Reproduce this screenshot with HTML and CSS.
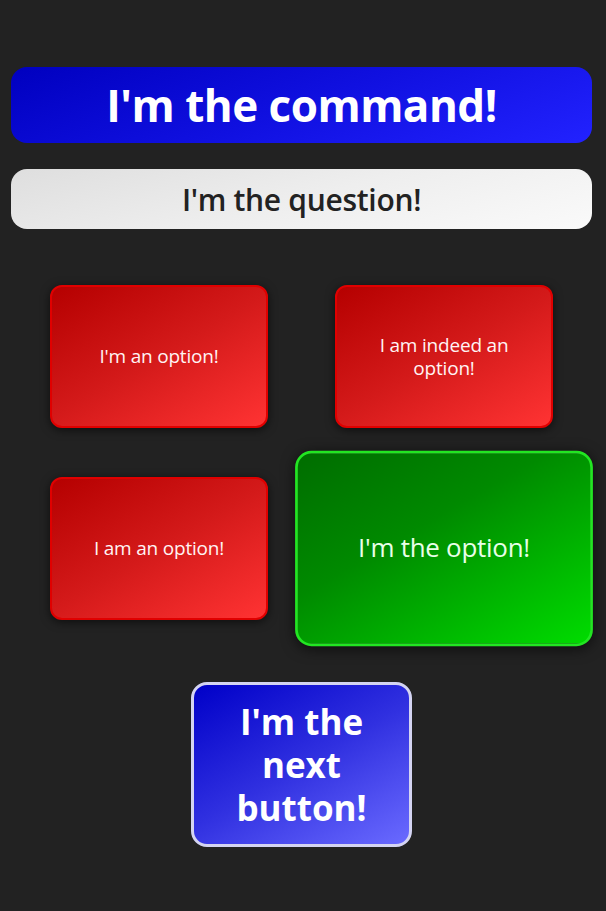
FILE: index.html
```html
<!DOCTYPE html>
<html>
<head>
<meta charset="utf-8">
<link rel="stylesheet" href="styles.css">
</head>
<body>
<div class="page">
  <div class="command">I'm the command!</div>
  <div class="question">I'm the question!</div>
  <div class="options">
    <div class="option">I'm an option!</div>
    <div class="option">I am indeed an option!</div>
    <div class="option">I am an option!</div>
    <div class="option correct">I'm the option!</div>
  </div>
  <div class="next-wrap">
    <div class="next">I'm the next button!</div>
  </div>
</div>
</body>
</html>
```

FILE: styles.css
```css
html, body {
  margin: 0;
  padding: 0;
  background: #222222;
}
body {
  font-family: "Open Sans", "Noto Sans", sans-serif;
}
.page {
  padding: 67px 14px 0 11px;
  display: flex;
  flex-direction: column;
}
.command {
  height: 76px;
  border-radius: 16px;
  background: linear-gradient(160deg, #0000bf 0%, #1010e0 50%, #2222ff 100%);
  color: #ffffff;
  font-weight: 700;
  font-size: 44px;
  letter-spacing: -0.5px;
  display: flex;
  align-items: center;
  justify-content: center;
}
.question {
  margin-top: 26px;
  height: 60px;
  border-radius: 16px;
  background: linear-gradient(165deg, #dedede 0%, #eeeeee 50%, #fafafa 100%);
  color: #222222;
  font-weight: 600;
  font-size: 30px;
  letter-spacing: -0.3px;
  display: flex;
  align-items: center;
  justify-content: center;
}
.options {
  margin-top: 56px;
  display: grid;
  grid-template-columns: 218px 218px;
  grid-auto-rows: 143px;
  column-gap: 67px;
  row-gap: 49px;
  justify-content: center;
}
.option {
  box-sizing: border-box;
  border: 2px solid #e00000;
  border-radius: 12px;
  background: linear-gradient(150deg, #b50000 0%, #d41a1a 50%, #ff3333 100%);
  box-shadow: 0 2px 10px rgba(0, 0, 0, 0.6);
  color: #fff4f4;
  font-size: 19px;
  letter-spacing: -0.2px;
  text-align: center;
  line-height: 23px;
  padding: 0 24px;
  display: flex;
  align-items: center;
  justify-content: center;
}
.option.correct {
  border: 2px solid #22e622;
  background: linear-gradient(150deg, #006d00 0%, #008a00 40%, #00dc00 100%);
  color: #e8ffe8;
  transform: scale(1.366);
}
.next-wrap {
  margin-top: 62px;
  display: flex;
  justify-content: center;
}
.next {
  box-sizing: border-box;
  width: 221px;
  height: 165px;
  border: 3px solid #d4d4f2;
  border-radius: 16px;
  background: linear-gradient(150deg, #0000c8 0%, #3030e0 50%, #6a6aff 100%);
  color: #ffffff;
  font-weight: 700;
  font-size: 35px;
  line-height: 43px;
  text-align: center;
  padding: 0 36px;
  display: flex;
  align-items: center;
  justify-content: center;
}
```
